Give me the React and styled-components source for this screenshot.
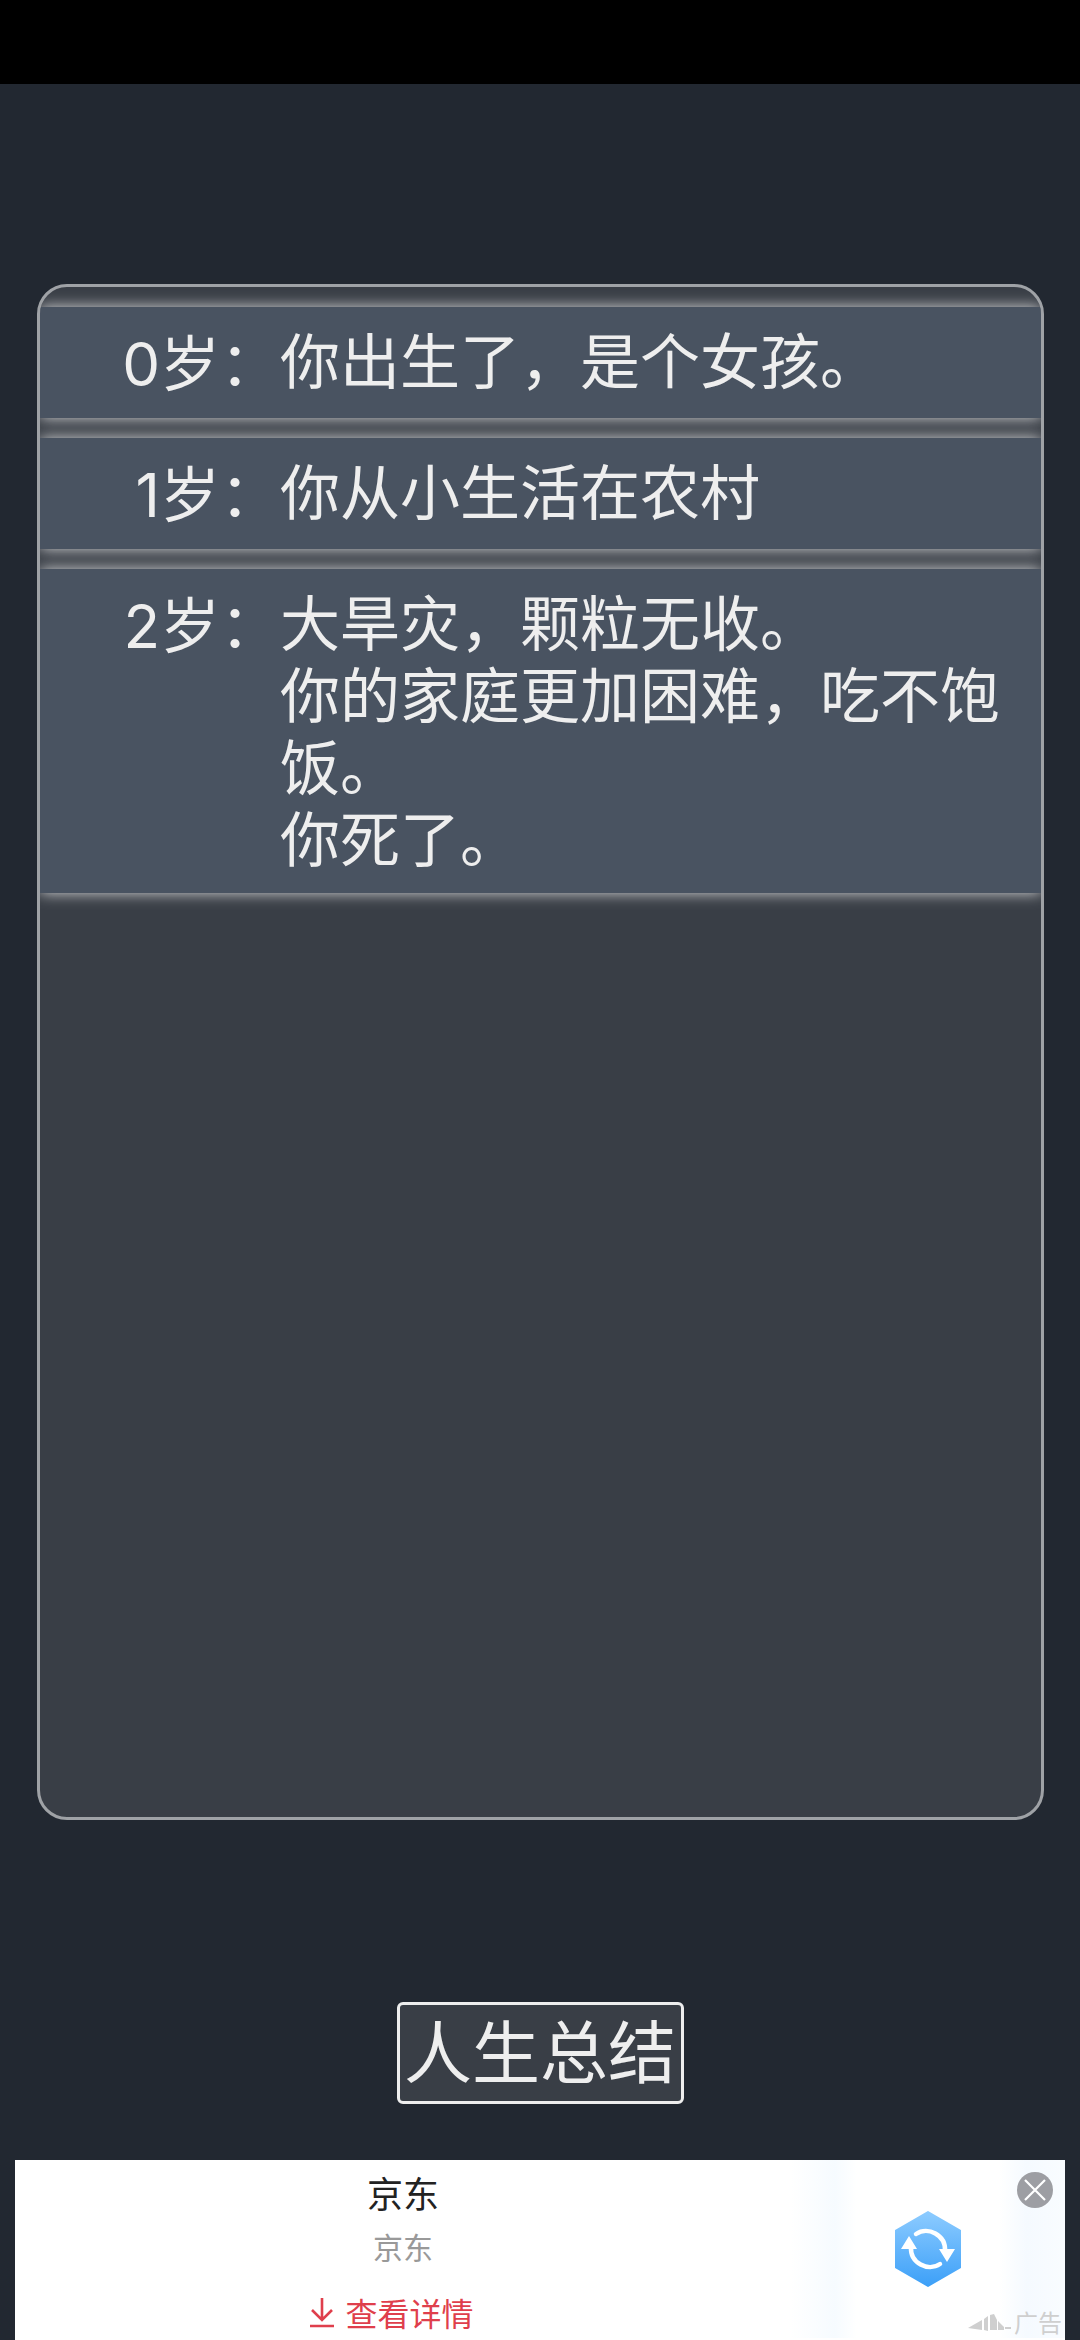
import React from "react";
import styled, { createGlobalStyle } from "styled-components";

const GlobalStyle = createGlobalStyle`
  html, body {
    margin: 0;
    padding: 0;
    background: #222831;
  }
  body {
    font-family: "Noto Sans CJK SC", "Noto Sans", sans-serif;
  }
`;

const Page = styled.div`
  width: 1080px;
  height: 2340px;
  overflow: hidden;
  display: flex;
  flex-direction: column;
  background: #222831;
`;

const StatusBar = styled.div`
  height: 84px;
  flex: none;
  background: #000;
`;

const Trajectory = styled.div`
  height: 1536px;
  margin: 200px 36px 0 37px;
  flex: none;
  box-sizing: border-box;
  padding-top: 20px;
  display: flex;
  flex-direction: column;
  gap: 20px;
  overflow: hidden;
  background: #393e46;
  border: 3px solid #9fa2a6;
  border-radius: 30px;
`;

const Row = styled.div`
  display: flex;
  flex: none;
  box-sizing: border-box;
  min-height: 111px;
  padding: 15px 10px 21px 0;
  background: #495361;
  box-shadow: 0 0 14px rgba(255, 255, 255, 0.8);
  color: #eeeeee;
  font-size: 60px;
  line-height: 72px;
`;

const Age = styled.div`
  width: 240px;
  flex: none;
  padding-top: 6px;
  margin-bottom: -6px;
  text-align: right;
  white-space: nowrap;
  font-family: Inter, "Noto Sans CJK SC", sans-serif;
`;

const Story = styled.div`
  flex: 1;
`;

const SummaryRow = styled.div`
  display: flex;
  justify-content: center;
  margin-top: 182px;
`;

const SummaryButton = styled.button`
  width: 287px;
  height: 102px;
  box-sizing: border-box;
  padding: 0 0 8px;
  background: #393e46;
  border: 3px solid #eeeeee;
  border-radius: 6px;
  color: #eeeeee;
  font-family: inherit;
  font-size: 68px;
  line-height: 82px;
  white-space: nowrap;
`;

const Ad = styled.div`
  position: relative;
  display: flex;
  height: 180px;
  margin: 56px 15px 0;
  background: #fff;
  flex: none;
`;

const AdText = styled.div`
  width: 776px;
  flex: none;
  display: flex;
  flex-direction: column;
  align-items: center;
`;

const AdTitle = styled.div`
  margin-top: 8px;
  color: #222;
  font-size: 36px;
  line-height: 48px;
`;

const AdSub = styled.div`
  margin-top: 10px;
  color: #999;
  font-size: 30px;
  line-height: 40px;
`;

const AdLink = styled.div`
  display: flex;
  align-items: center;
  gap: 10px;
  margin: 28px 23px 0 0;
  color: #df3f4c;
  font-size: 32px;
  line-height: 36px;
`;

const AdVisual = styled.div`
  flex: 1;
  display: flex;
  align-items: center;
  justify-content: center;
  height: 178px;
  background: linear-gradient(
    90deg,
    #ffffff 0,
    #f6fbff 16%,
    #ffffff 24%,
    #ffffff 76%,
    #f5faff 86%,
    #f9fcff 100%
  );
`;

const CloseButton = styled.div`
  position: absolute;
  top: 12px;
  right: 12px;
  width: 36px;
  height: 36px;
  display: flex;
  border-radius: 50%;
  background: #9d9ea3;
`;

const AdMark = styled.div`
  position: absolute;
  right: 3px;
  bottom: 0;
  display: flex;
  align-items: center;
  gap: 2px;
  color: #cfcfcf;
  font-size: 24px;
  line-height: 36px;
`;

const rows = [
  { age: "0岁：", lines: ["你出生了，是个女孩。"] },
  { age: "1岁：", lines: ["你从小生活在农村"] },
  {
    age: "2岁：",
    lines: ["大旱灾，颗粒无收。", "你的家庭更加困难，吃不饱饭。", "你死了。"],
  },
];

export default function App() {
  return (
    <Page>
      <GlobalStyle />
      <StatusBar />
      <Trajectory>
        {rows.map((row) => (
          <Row key={row.age}>
            <Age>{row.age}</Age>
            <Story>
              {row.lines.map((line) => (
                <div key={line}>{line}</div>
              ))}
            </Story>
          </Row>
        ))}
      </Trajectory>
      <SummaryRow>
        <SummaryButton>人生总结</SummaryButton>
      </SummaryRow>
      <Ad>
        <AdText>
          <AdTitle>京东</AdTitle>
          <AdSub>京东</AdSub>
          <AdLink>
            <svg width="26" height="32" viewBox="0 0 26 32" fill="none" stroke="#df3f4c" strokeWidth="2.6">
              <path d="M13 2v22M3 14l10 10 10-10M1 30h24" />
            </svg>
            查看详情
          </AdLink>
        </AdText>
        <AdVisual>
          <svg width="68" height="76" viewBox="0 0 68 76">
            <defs>
              <linearGradient id="hex" x1="0" y1="0" x2="0" y2="1">
                <stop offset="0" stopColor="#8ccbff" />
                <stop offset="1" stopColor="#3da0f8" />
              </linearGradient>
            </defs>
            <path d="M34 1l32 18.500v37L34 75 2 56.500v-37z" fill="url(#hex)" stroke="url(#hex)" strokeLinejoin="round" strokeWidth="2" />
            <g fill="none" stroke="#fff" strokeWidth="4.500" strokeLinecap="round">
              <path d="M17 36c-1 16 17 25 29 17" />
              <path d="M51 40c1-16-17-25-29-17" />
            </g>
            <path d="M15 25l-8 13h16zM53 51l8-13H45z" fill="#fff" />
          </svg>
        </AdVisual>
        <CloseButton>
          <svg width="36" height="36" viewBox="0 0 36 36" stroke="#fff" strokeWidth="2.200">
            <path d="M8 8l20 20M28 8L8 28" />
          </svg>
        </CloseButton>
        <AdMark>
          <svg width="44" height="20" viewBox="0 0 44 20" fill="#cfcfcf">
            <path d="M0 16L14 8v10zM16 7l4-3v15l-4-1zM22 3l4-1 3 6v10h-7zM30 9l6 6v3h-6zM37 15h6v2h-6z" />
          </svg>
          广告
        </AdMark>
      </Ad>
    </Page>
  );
}
